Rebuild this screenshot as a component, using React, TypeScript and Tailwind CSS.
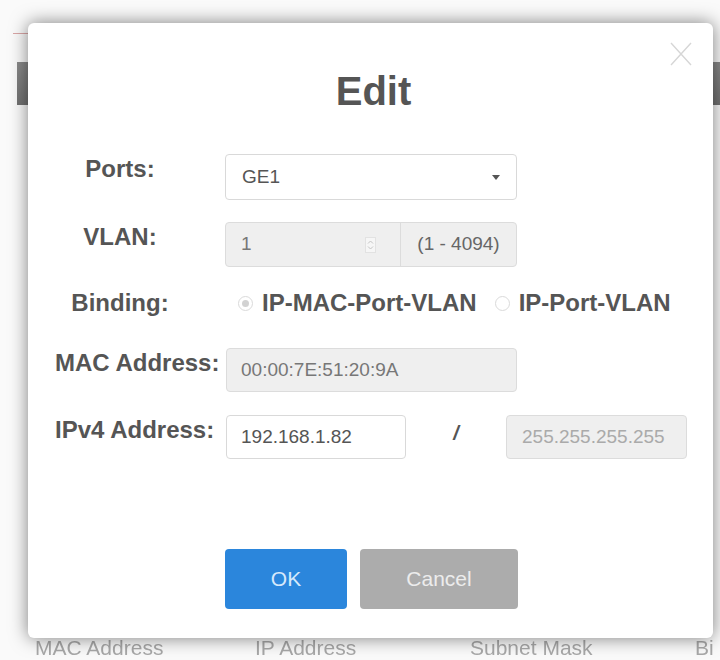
import React from "react";

const LABEL =
  "w-[130px] shrink-0 pt-px text-center text-[24px] leading-[28px] font-bold whitespace-nowrap text-[#555]";

function Row({ label, className, children }: { label: string; className: string; children: React.ReactNode }) {
  return (
    <div className={`flex items-start pl-[27px] ${className}`}>
      <div className={LABEL}>{label}</div>
      <div className="ml-[40px] flex items-start">{children}</div>
    </div>
  );
}

function Radio({ checked }: { checked?: boolean }) {
  return (
    <span className="flex h-[15px] w-[15px] shrink-0 items-center justify-center rounded-full border border-[#dadada] bg-white">
      {checked && <span className="h-[7px] w-[7px] rounded-full bg-[#d2d2d2]" />}
    </span>
  );
}

export default function App() {
  return (
    <div className="relative h-[660px] overflow-hidden bg-[#fafafa] font-['Liberation_Sans',Arial,sans-serif]">
      {/* page behind the dialog */}
      <div className="pl-[13px] pt-[33px]">
        <div className="h-px w-[80px] bg-[#d9a6a6]" />
      </div>
      <div className="ml-[17px] mt-[28px] h-[43px] bg-gradient-to-b from-[#8a8a8a] to-[#727272]" />
      <div className="mt-[531px] flex pl-[35px] text-[21px] leading-[24px] text-[#a8a8a8] blur-[0.4px] whitespace-nowrap">
        <span className="w-[220px]">MAC Address</span>
        <span className="w-[215px]">IP Address</span>
        <span className="w-[225px]">Subnet Mask</span>
        <span>Bi</span>
      </div>

      {/* edit dialog */}
      <div className="absolute left-[28px] top-[23px] h-[615px] w-[685px] rounded-[6px] bg-white shadow-[0_0_18px_rgba(0,0,0,0.5)]">
        <button className="absolute right-[21px] top-[19px] text-[#d6d6d6]">
          <svg width="22" height="24" viewBox="0 0 22 24" fill="none" stroke="currentColor" strokeWidth="1.4">
            <path d="M1 1 L21 23 M21 1 L1 23" />
          </svg>
        </button>

        <h2 className="pl-[6px] pt-[45px] text-center text-[40px] leading-[46px] font-bold text-[#555]">Edit</h2>

        <Row label="Ports:" className="mt-[40px]">
          <div className="flex h-[46px] w-[292px] items-center justify-between rounded-[4px] border border-[#d9d9d9] bg-white pl-[16px] pr-[16px]">
            <span className="text-[19px] text-[#555]">GE1</span>
            <span className="h-0 w-0 border-x-[4px] border-t-[5px] border-x-transparent border-t-[#555]" />
          </div>
        </Row>

        <Row label="VLAN:" className="mt-[22px]">
          <div className="flex h-[45px] w-[292px] rounded-[4px] border border-[#dcdcdc] bg-[#efefef]">
            <div className="flex w-[174px] items-center justify-between pl-[15px] pr-[24px]">
              <span className="text-[19px] text-[#777]">1</span>
              <span className="flex h-[16px] w-[11px] flex-col items-center justify-center border border-[#e2e2e2] bg-[#f6f6f6] text-[#c4c4c4]">
                <svg width="7" height="12" viewBox="0 0 7 12" fill="none" stroke="currentColor" strokeWidth="1">
                  <path d="M1 4.5 L3.5 2 L6 4.5 M1 7.5 L3.5 10 L6 7.5" />
                </svg>
              </span>
            </div>
            <div className="flex flex-1 items-center justify-center border-l border-[#dcdcdc] text-[19px] text-[#666]">
              (1 - 4094)
            </div>
          </div>
        </Row>

        <Row label="Binding:" className="mt-[21px]">
          <div className="flex items-center pt-px text-[24px] leading-[28px] font-bold text-[#555]">
            <span className="ml-[13px] flex">
              <Radio checked />
            </span>
            <span className="ml-[9px] whitespace-nowrap">IP-MAC-Port-VLAN</span>
            <span className="ml-[18px] flex">
              <Radio />
            </span>
            <span className="ml-[9px] whitespace-nowrap">IP-Port-VLAN</span>
          </div>
        </Row>

        <Row label="MAC Address:" className="mt-[31px]">
          <div className="ml-px flex h-[44px] w-[291px] items-center rounded-[4px] border border-[#dcdcdc] bg-[#efefef] pl-[14px] text-[19px] text-[#777]">
            00:00:7E:51:20:9A
          </div>
        </Row>

        <Row label="IPv4 Address:" className="mt-[23px]">
          <div className="ml-px flex h-[44px] w-[180px] items-center rounded-[4px] border border-[#d9d9d9] bg-white pl-[14px] text-[19px] text-[#555]">
            192.168.1.82
          </div>
          <div className="w-[100px] pt-[6px] text-center text-[20px] leading-[24px] font-bold italic text-[#555]">/</div>
          <div className="flex h-[44px] w-[181px] items-center rounded-[4px] border border-[#dcdcdc] bg-[#efefef] pl-[15px] text-[19px] text-[#aaa]">
            255.255.255.255
          </div>
        </Row>

        <div className="mt-[90px] flex gap-[13px] pl-[197px]">
          <button className="h-[60px] w-[122px] rounded-[4px] bg-[#2b86dc] text-[21px] text-[#d6e9fb]">OK</button>
          <button className="h-[60px] w-[158px] rounded-[4px] bg-[#acacac] text-[21px] text-[#ececec]">Cancel</button>
        </div>
      </div>
    </div>
  );
}
